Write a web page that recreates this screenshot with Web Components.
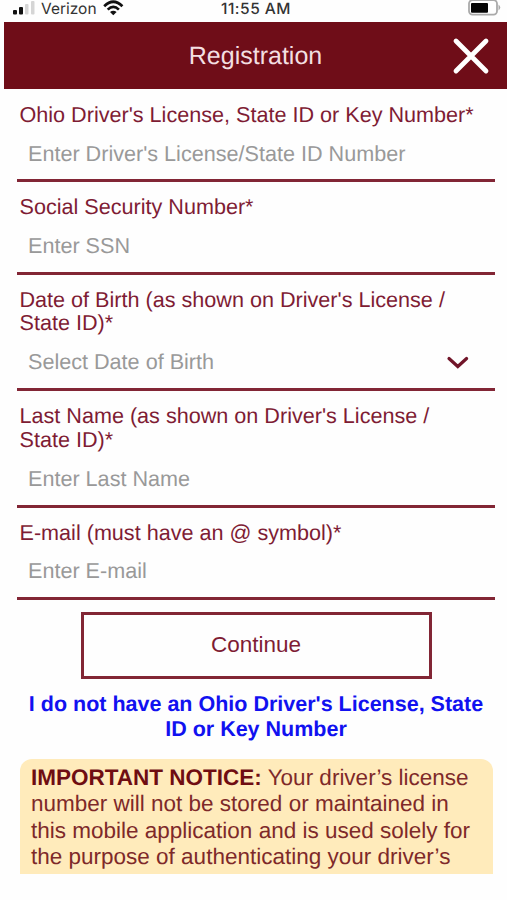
<!DOCTYPE html>
<html lang="en">
<head>
  <meta charset="UTF-8">
  <meta name="viewport" content="width=device-width, initial-scale=1.0">
  <title>Registration</title>
  <style>
    html, body {
      margin: 0;
      height: 100%;
    }
    body {
      --maroon: #6f0d18;
      --line: #822635;
      background: #fefefe;
      color: #7e1c34;
      font-family: "Liberation Sans", Arial, sans-serif;
      font-size: 21.6px;
      overflow: hidden;
      text-rendering: geometricPrecision;
    }
  </style>
</head>
<body>
  <template id="status-bar">
    <style>
      :host {
        display: grid;
        grid-template-columns: 1fr auto 1fr;
        height: 22px;
        color: #333;
        font: 15.5px/18px Inter, sans-serif;
      }
      .left { display: flex; padding-left: 13px; }
      .left span { width: 57px; margin-left: 6px; }
      .left .wifi { margin-left: 5px; }
      .time { font-weight: 500; letter-spacing: 0.5px; padding-left: 5px; }
      .right { display: flex; justify-content: flex-end; padding-right: 6px; }
      svg { display: block; flex: none; }
    </style>
    <div class="left">
      <svg width="22" height="16" viewBox="0 0 22 16">
        <rect x="0" y="10" width="4" height="4.5" rx="1" fill="#111"/>
        <rect x="6" y="7" width="4" height="7.5" rx="1" fill="#111"/>
        <rect x="12" y="4" width="3.5" height="10.5" rx="1" fill="#d5d5d5"/>
        <rect x="18" y="1" width="3.5" height="13.5" rx="1" fill="#d5d5d5"/>
      </svg>
      <span><slot name="carrier"></slot></span>
      <svg class="wifi" width="21" height="16" viewBox="0 0 21 16" fill="none" stroke="#111" stroke-width="2.7">
        <path d="M1.2 6.2Q10.3 -2.8 19.4 6.2"/>
        <path d="M4.7 9.6Q10.3 4.2 15.9 9.6"/>
        <path d="M10.3 15.2L7 12.1Q10.3 9.2 13.6 12.1Z" fill="#111" stroke="none"/>
      </svg>
    </div>
    <div class="time"><slot></slot></div>
    <div class="right">
      <svg width="33" height="17" viewBox="0 0 33 17">
        <rect x="1" y="0" width="28" height="14.6" rx="3.5" fill="#fff" stroke="#aaa" stroke-width="1.8"/>
        <rect x="3" y="3" width="17" height="9.7" rx="1" fill="#050505"/>
        <path d="M30.5 4.5Q34 7.5 30.5 10.5Z" fill="#aaa"/>
      </svg>
    </div>
  </template>

  <template id="title-bar">
    <style>
      :host {
        display: grid;
        grid-template-columns: 1fr auto 1fr;
        align-items: center;
        height: 67px;
        margin-left: 4px;
        background: var(--maroon);
        color: #f3dfe1;
        font-size: 25px;
      }
      .title { grid-column: 2; padding-top: 1px; }
      svg { justify-self: end; margin-right: 17px; }
    </style>
    <div class="title"><slot></slot></div>
    <svg width="38" height="38" viewBox="0 0 38 38" stroke="#fff" stroke-width="4.8" stroke-linecap="round">
      <path d="M4 4L34 34M34 4L4 34"/>
    </svg>
  </template>

  <template id="form-field">
    <style>
      :host {
        display: flex;
        flex-direction: column;
        height: 92.3px;
        box-sizing: border-box;
        border-bottom: 3px solid var(--line);
      }
      :host([tall]) { height: 116.5px; }
      label { padding: 13.2px 0 0 2.5px; line-height: 23.3px; }
      .value {
        display: flex;
        justify-content: space-between;
        margin-top: auto;
        padding: 0 26px 13.7px 11px;
        line-height: 24px;
        color: #999;
      }
      svg { display: none; margin-top: 6px; }
      :host([picker]) svg { display: block; }
    </style>
    <label><slot></slot></label>
    <div class="value">
      <span id="hint"></span>
      <svg width="23" height="14" viewBox="0 0 23 14" fill="none" stroke="#711529" stroke-width="3.2" stroke-linecap="round">
        <path d="M3 2.5L11.8 10.5L20.6 2.5"/>
      </svg>
    </div>
  </template>

  <template id="outline-button">
    <style>
      :host { display: block; }
      button {
        display: block;
        width: 351px;
        height: 67px;
        margin: 0 auto;
        padding: 0;
        border: 3px solid var(--line);
        background: none;
        color: inherit;
        font: 22.5px "Liberation Sans", Arial, sans-serif;
      }
    </style>
    <button><slot></slot></button>
  </template>

  <template id="text-link">
    <style>
      :host {
        display: block;
        color: #1111f0;
        font-size: 21.5px;
        font-weight: bold;
        line-height: 25px;
        text-align: center;
      }
    </style>
    <slot></slot>
  </template>

  <template id="notice-box">
    <style>
      :host {
        display: block;
        height: 115px;
        box-sizing: border-box;
        padding: 6px 0 0 11px;
        overflow: hidden;
        border-radius: 12px 12px 0 0;
        background: #ffebbb;
        color: #7e2929;
        font-size: 22.5px;
        line-height: 26.5px;
        white-space: nowrap;
      }
      ::slotted(b) { color: #6f0d12; }
    </style>
    <slot></slot>
  </template>

  <template id="registration-page">
    <style>
      :host { display: block; }
      .fields { padding: 0 12px 0 17px; margin-top: 1px; }
      .button { margin: 12px 0 0 5px; }
      .link { margin: 13px 0 0 5px; }
      .notice { margin: 17px 14px 0 20px; }
    </style>
    <slot name="status"></slot>
    <slot name="title"></slot>
    <div class="fields"><slot></slot></div>
    <div class="button"><slot name="button"></slot></div>
    <div class="link"><slot name="link"></slot></div>
    <div class="notice"><slot name="notice"></slot></div>
  </template>

  <script>
    // clones the template that has the same id as the tag
    class BaseElement extends HTMLElement {
      connectedCallback() {
        if (this.shadowRoot) return;
        const tmpl = document.getElementById(this.localName);
        this.attachShadow({ mode: 'open' }).appendChild(tmpl.content.cloneNode(true));
        this.render();
      }
      render() {}
    }

    class FormField extends BaseElement {
      render() {
        this.shadowRoot.getElementById("hint").textContent = this.getAttribute("hint");
      }
    }

    customElements.define('status-bar', class extends BaseElement {});
    customElements.define('title-bar', class extends BaseElement {});
    customElements.define('form-field', FormField);
    customElements.define('outline-button', class extends BaseElement {});
    customElements.define('text-link', class extends BaseElement {});
    customElements.define('notice-box', class extends BaseElement {});
    customElements.define('registration-page', class extends BaseElement {});
  </script>

  <registration-page>
    <status-bar slot="status"><span slot="carrier">Verizon</span>11:55 AM</status-bar>
    <title-bar slot="title">Registration</title-bar>
    <form-field hint="Enter Driver's License/State ID Number">Ohio Driver's License, State ID or Key Number*</form-field>
    <form-field hint="Enter SSN">Social Security Number*</form-field>
    <form-field tall picker hint="Select Date of Birth">Date of Birth (as shown on Driver's License /<br>State ID)*</form-field>
    <form-field tall hint="Enter Last Name">Last Name (as shown on Driver's License /<br>State ID)*</form-field>
    <form-field hint="Enter E-mail">E-mail (must have an @ symbol)*</form-field>
    <outline-button slot="button">Continue</outline-button>
    <text-link slot="link">I do not have an Ohio Driver's License, State<br>ID or Key Number</text-link>
    <notice-box slot="notice"><b>IMPORTANT NOTICE:</b> Your driver’s license<br>number will not be stored or maintained in<br>this mobile application and is used solely for<br>the purpose of authenticating your driver’s</notice-box>
  </registration-page>
</body>
</html>
